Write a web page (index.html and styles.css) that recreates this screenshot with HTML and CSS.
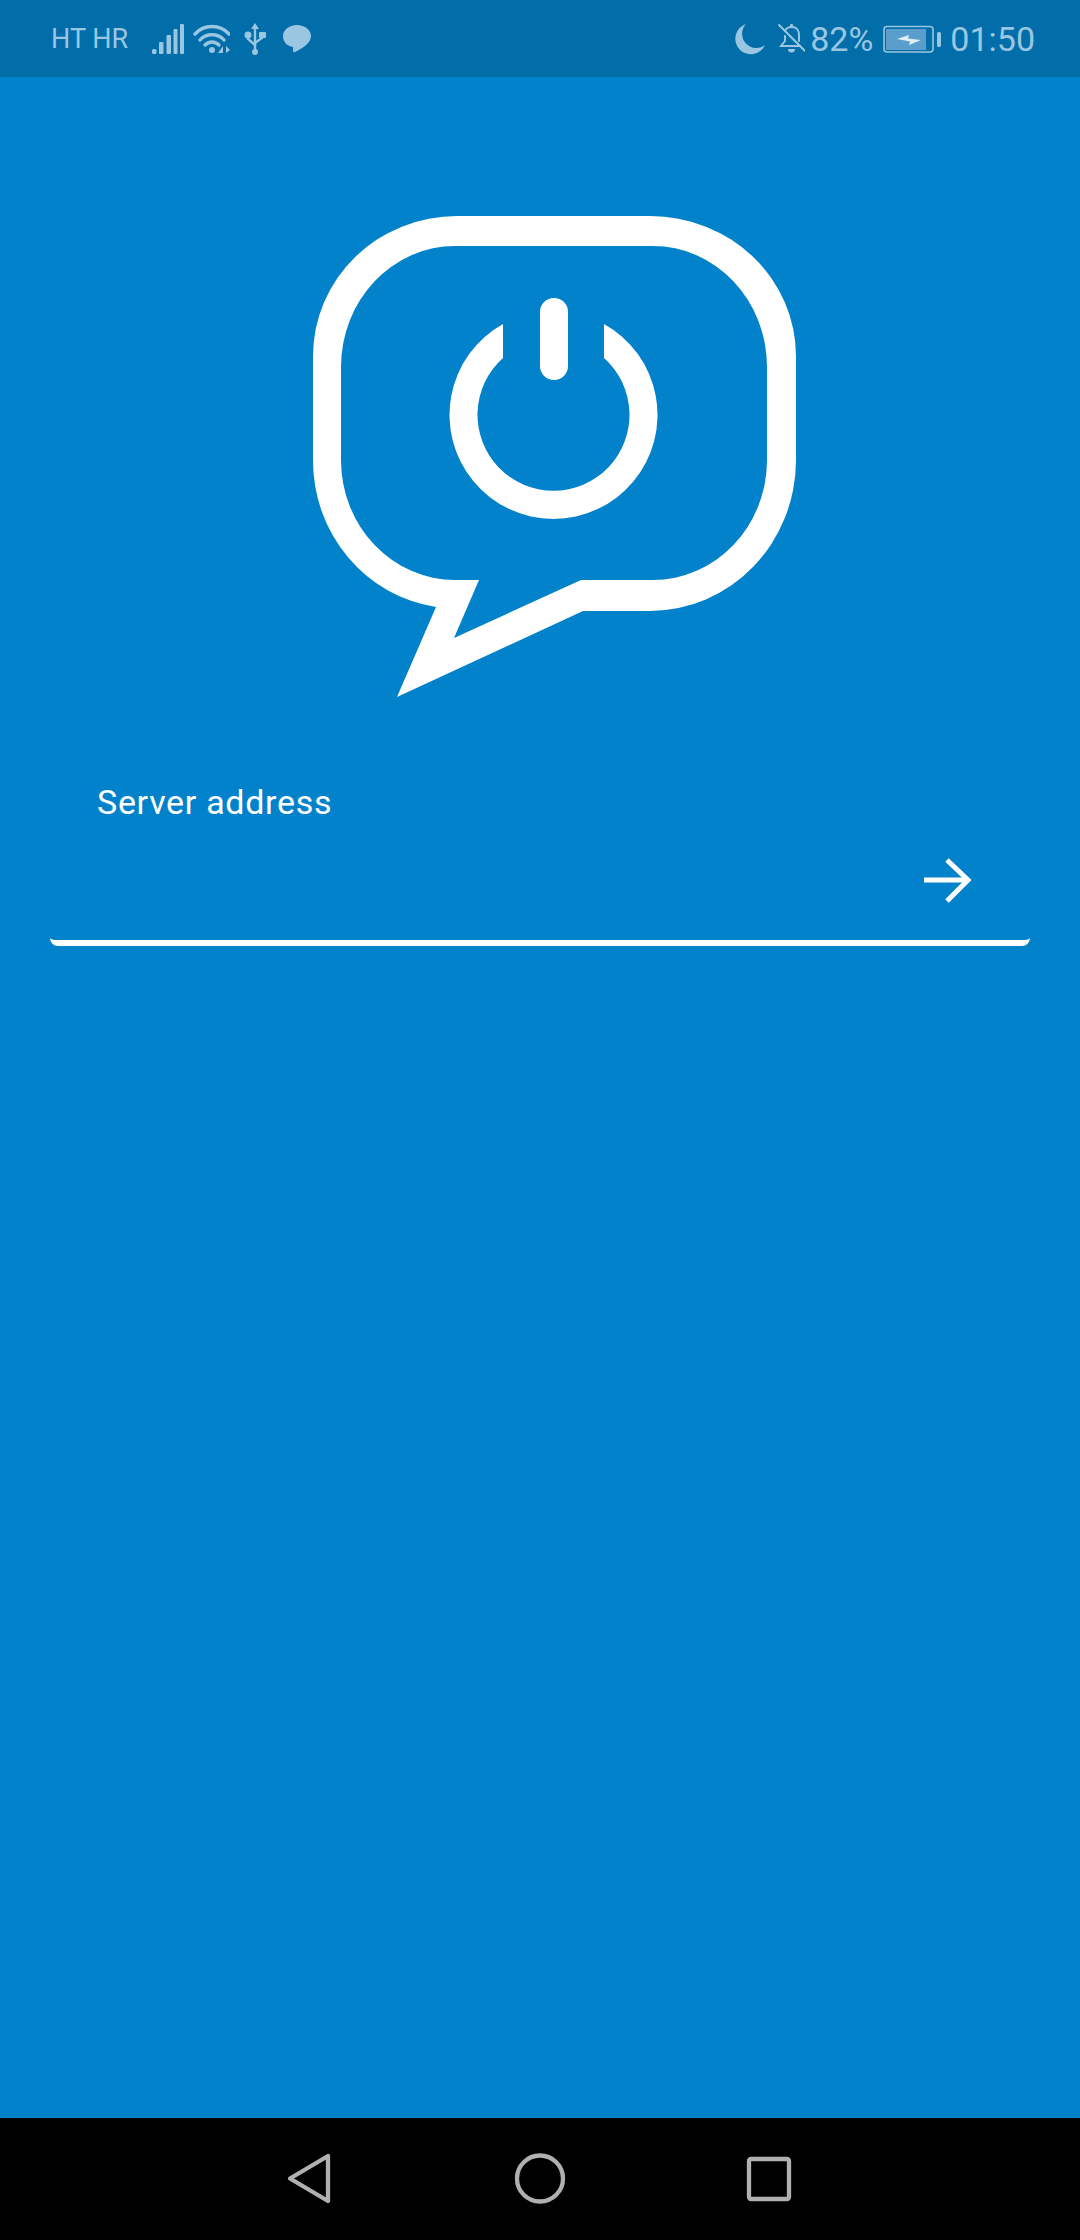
FILE: index.html
```html
<!DOCTYPE html>
<html lang="en">
<head>
    <meta charset="UTF-8">
    <title>Server address</title>
    <link rel="stylesheet" href="styles.css">
</head>
<body>
<div id="phone">
    <div id="status-bar">
        <div class="status-group">
            <span class="carrier">HT HR</span>
            <svg width="32" height="30" viewBox="152 25 32 30">
                <rect x="152" y="50" width="4.500" height="5" rx="1.500"/>
                <rect x="159" y="43" width="4.500" height="12" rx="1"/>
                <rect x="166.500" y="36" width="4.500" height="19" rx="1"/>
                <rect x="173.500" y="30" width="4" height="25" rx="1"/>
                <rect x="180" y="25" width="4" height="30" rx="1"/>
            </svg>
            <svg width="37" height="30" viewBox="193 25 37 30">
                <g class="line" stroke-width="3.400">
                    <path d="M195 35 C204 25 220 25 229 35"/>
                    <path d="M200 41 C206 34 218 34 224 41"/>
                    <path d="M205 46 C209 42 215 42 219 46"/>
                </g>
                <circle cx="212" cy="51" r="3"/>
                <polygon points="223,47 223,54 218,54"/>
                <polygon points="226,47 226,54 230,51"/>
            </svg>
            <svg width="32" height="32" viewBox="239 25 32 32">
                <g class="line" stroke-width="2.400">
                    <path d="M255 29 V52"/>
                    <path d="M248 39 V41 L255 47"/>
                    <path d="M262 39 V40 L255 45"/>
                </g>
                <polygon points="255,25 259,31 251,31"/>
                <circle cx="255" cy="54" r="3"/>
                <circle cx="248" cy="37" r="3.500"/>
                <rect x="259" y="34" width="7" height="6" rx="1"/>
            </svg>
            <svg width="34" height="30" viewBox="280 26 34 30">
                <path d="M297 27 C305 27 311 32 311 38 C311 45 303 50 295 54 C293 55 293 53 293 52 V49 C287 48 283 44 283 38 C283 32 289 27 297 27 Z"/>
            </svg>
        </div>
        <div class="status-group">
            <svg width="36" height="32" viewBox="731 24 36 32">
                <path d="M744 25 A15.500 15.500 0 1 0 763 46 A14.200 14.200 0 0 1 744 25 Z"/>
            </svg>
            <svg width="27" height="30" viewBox="776 26 27 30">
                <g class="line" stroke-width="2">
                    <path d="M783 33 C784 30 787 29 790 29 C795 29 797 33 797 37 V43"/>
                    <path d="M783 38 V43 L779 48 H798"/>
                    <path d="M777 27 L803 53"/>
                </g>
                <path d="M786 51 H793 A3.500 3.500 0 0 1 786 51 Z"/>
                <rect x="788" y="26" width="3" height="3" rx="1"/>
            </svg>
            <span class="percent">82%</span>
            <svg width="60" height="28" viewBox="881 26 60 28">
                <rect class="line" x="884" y="27.500" width="49" height="25.500" rx="3" stroke-width="1.600"/>
                <rect class="charge" x="886" y="30" width="40" height="21"/>
                <polygon class="bolt" points="897,40 909,36 908,39.500 921,41 909,46 910,42.500"/>
                <rect x="937" y="33" width="4" height="15" rx="1.500"/>
            </svg>
            <span class="clock">01:50</span>
        </div>
    </div>

    <div id="content">
        <svg id="logo" width="490" height="490" viewBox="310 210 490 490">
            <path fill-rule="evenodd" d="M457 216 H650 A146 140 0 0 1 796 356 V460 A146 151 0 0 1 650 611 H583 L397 697 L436 607 A144 148 0 0 1 313 460 V356 A144 140 0 0 1 457 216 Z
                M455 246 A114 121 0 0 0 341 367 V460 A114 120 0 0 0 455 580 H479 L454 638 L581 580 H653 A114 120 0 0 0 767 460 V367 A114 121 0 0 0 653 246 Z"/>
            <path d="M503 324 A104 104 0 1 0 604 324 V358 A76 76 0 1 1 503 358 Z"/>
            <rect x="540" y="298" width="28" height="82" rx="14"/>
        </svg>
        <div id="server-field">
            <label class="field-label">Server address</label>
            <div class="field-row">
                <svg width="50" height="50" viewBox="923 855 50 50">
                    <path d="M924 880 H968 M947 860 L968 880 L947 901"/>
                </svg>
            </div>
        </div>
    </div>

    <div id="nav-bar">
        <svg width="60" height="60" viewBox="279 2149 60 60">
            <path d="M328 2156 L290 2178.500 L328 2201 Z"/>
        </svg>
        <svg width="60" height="60" viewBox="510 2149 60 60">
            <circle cx="540" cy="2178.500" r="23"/>
        </svg>
        <svg width="60" height="60" viewBox="741 2149 60 60">
            <rect x="749" y="2159" width="40" height="40" rx="2"/>
        </svg>
    </div>
</div>
</body>
</html>
```

FILE: styles.css
```css
body {
    margin: 0;
    padding: 0;
    font-family: Roboto, sans-serif;
    background-color: #0382cc;
}

#phone {
    width: 1080px;
    height: 2240px;
    display: flex;
    flex-direction: column;
}

#status-bar {
    height: 77px;
    box-sizing: border-box;
    padding: 0 45px 0 51px;
    background-color: #016da9;
    color: #9ac6e1;
    display: flex;
    justify-content: space-between;
    align-items: center;
}

.status-group {
    display: flex;
    align-items: center;
    gap: 9px;
}

.status-group svg {
    display: block;
    fill: #9ac6e1;
}

.status-group .line {
    fill: none;
    stroke: #9ac6e1;
    stroke-linecap: round;
}

.status-group .charge {
    fill: #5a9fcb;
}

.status-group .bolt {
    fill: #e2eff7;
}

.carrier {
    font-size: 27px;
    margin-right: 15px;
}

.percent {
    font-size: 34px;
    margin: 0 -1px 0 -4px;
}

.clock {
    font-size: 34px;
}

#content {
    flex: 1;
}

#logo {
    display: block;
    margin: 133px 0 0 310px;
    fill: #ffffff;
}

#server-field {
    margin: 82px 50px 0;
    height: 164px;
    box-sizing: border-box;
    padding-left: 47px;
    border-bottom: 6px solid #ffffff;
    border-radius: 0 0 8px 8px;
    color: #ffffff;
}

.field-label {
    display: block;
    font-size: 34px;
    letter-spacing: 0.7px;
    line-height: 40px;
}

.field-row {
    display: flex;
    justify-content: flex-end;
    margin-top: 33px;
    padding-right: 57px;
}

.field-row svg {
    display: block;
    fill: none;
    stroke: #ffffff;
    stroke-width: 5;
}

#nav-bar {
    height: 122px;
    box-sizing: border-box;
    padding-left: 279px;
    background-color: #000000;
    display: flex;
    align-items: center;
    gap: 171px;
}

#nav-bar svg {
    display: block;
    fill: none;
    stroke: #b0b0b0;
    stroke-width: 4.300;
    stroke-linejoin: round;
}
```
